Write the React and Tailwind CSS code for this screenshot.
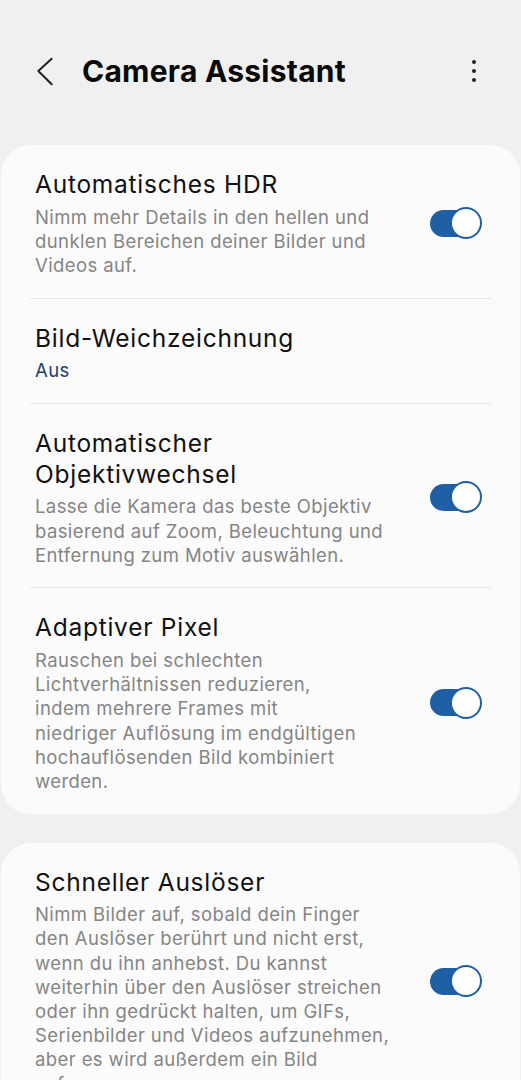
import React from 'react';

const Toggle = () => (
  <div className="relative w-[52px] h-[32px] shrink-0">
    <div className="absolute left-0 top-[2.5px] w-[48px] h-[27px] rounded-full bg-[#1f5fa6]" />
    <div className="absolute right-0 top-0 w-[32px] h-[32px] rounded-full bg-white border-2 border-[#1f5fa6]" />
  </div>
);

const Lines = ({ lines }) => (
  <>
    {lines.map((l, i) => (
      <React.Fragment key={i}>
        {l}
        {i < lines.length - 1 && <br />}
      </React.Fragment>
    ))}
  </>
);

const Item = ({ title, desc, value, toggle }) => (
  <div className="flex items-center pl-[34px] pr-[38px] pt-[24px] pb-[20.5px]">
    <div className="flex-1 min-w-0">
      <p className="text-[24.5px] leading-[31px] text-[#111] tracking-[0.75px]">
        <Lines lines={title} />
      </p>
      {desc && (
        <p className="mt-[4.5px] text-[18.5px] leading-[24.2px] text-[#858585] tracking-[0.4px] whitespace-nowrap">
          <Lines lines={desc} />
        </p>
      )}
      {value && (
        <p className="mt-[4.5px] text-[18.5px] leading-[24.2px] text-[#1a416e] tracking-[0.4px]">{value}</p>
      )}
    </div>
    {toggle && <Toggle />}
  </div>
);

const Divider = () => <div className="mx-[29px] h-px bg-[#e6e6e6]" />;

const App = () => {
  return (
    <div className="min-h-screen bg-[#f0f0f0] font-['Inter',sans-serif] overflow-hidden">
      <header className="flex items-center h-[80px] mt-[31px]">
        <svg width="24" height="30" viewBox="0 0 24 30" className="ml-[33px]" fill="none">
          <path d="M18.7 2.7 L5.3 15 L18.7 28.3" stroke="#222" strokeWidth="2" strokeLinecap="round" strokeLinejoin="round" />
        </svg>
        <h1 className="ml-[25px] flex-1 text-[30px] font-bold text-[#0a0a0a] tracking-[0.25px]">Camera Assistant</h1>
        <div className="mr-[45px] flex flex-col gap-[5px] items-center">
          <span className="block w-[4px] h-[4px] rounded-full bg-[#222]" />
          <span className="block w-[4px] h-[4px] rounded-full bg-[#222]" />
          <span className="block w-[4px] h-[4px] rounded-full bg-[#222]" />
        </div>
      </header>

      <section className="mt-[34px] mx-px rounded-[30px] bg-[#fbfbfb]">
        <Item
          title={['Automatisches HDR']}
          desc={['Nimm mehr Details in den hellen und', 'dunklen Bereichen deiner Bilder und', 'Videos auf.']}
          toggle
        />
        <Divider />
        <Item title={['Bild-Weichzeichnung']} value="Aus" />
        <Divider />
        <Item
          title={['Automatischer', 'Objektivwechsel']}
          desc={['Lasse die Kamera das beste Objektiv', 'basierend auf Zoom, Beleuchtung und', 'Entfernung zum Motiv auswählen.']}
          toggle
        />
        <Divider />
        <Item
          title={['Adaptiver Pixel']}
          desc={[
            'Rauschen bei schlechten',
            'Lichtverhältnissen reduzieren,',
            'indem mehrere Frames mit',
            'niedriger Auflösung im endgültigen',
            'hochauflösenden Bild kombiniert',
            'werden.',
          ]}
          toggle
        />
      </section>

      <section className="mt-[29px] mx-px rounded-[30px] bg-[#fbfbfb]">
        <Item
          title={['Schneller Auslöser']}
          desc={[
            'Nimm Bilder auf, sobald dein Finger',
            'den Auslöser berührt und nicht erst,',
            'wenn du ihn anhebst. Du kannst',
            'weiterhin über den Auslöser streichen',
            'oder ihn gedrückt halten, um GIFs,',
            'Serienbilder und Videos aufzunehmen,',
            'aber es wird außerdem ein Bild',
            'aufgenommen.',
          ]}
          toggle
        />
      </section>
    </div>
  );
};

export default App;
